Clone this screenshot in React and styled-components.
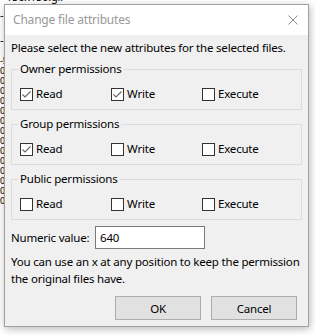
import React from 'react'
import styled, { createGlobalStyle } from 'styled-components'

const GlobalStyle = createGlobalStyle`
  html, body {
    margin: 0;
    padding: 0;
    background: #ffffff;
  }
  body {
    font-family: "Noto Sans", "Open Sans", sans-serif;
    font-size: 11.5px;
    letter-spacing: -0.2px;
    color: #000;
  }
`;

const Screen = styled.div`
  position: relative;
  width: 315px;
  height: 335px;
  overflow: hidden;
  background: #ffffff;
`;

// file list of the main window, mostly hidden behind the dialog
const FileList = styled.div`
  display: flex;
  flex-direction: column;
  margin-top: -11px;
  color: #000;
`;
const FileLine = styled.div`
  white-space: nowrap;
  font-size: ${p => (p.h < 12 ? 9 : 11)}px;
  height: ${p => p.h}px;
  line-height: ${p => p.h}px;
  overflow: hidden;
`;

const Dialog = styled.div`
  position: absolute;
  left: 4px;
  top: 4px;
  width: 305px;
  height: 323px;
  box-sizing: border-box;
  border: 1px solid #a0a0a0;
  background: #f0f0f0;
  box-shadow: 1px 2px 8px rgba(0, 0, 0, 0.28);
  display: flex;
  flex-direction: column;
`;

const TitleBar = styled.div`
  flex-shrink: 0;
  height: 30px;
  background: #ffffff;
  display: flex;
  align-items: center;
  justify-content: space-between;
  padding: 0 10px 0 8px;
`;
const Title = styled.div`
  color: #999999;
  font-size: 12px;
  margin-top: -1px;
`;
const CloseIcon = styled.svg`
  width: 10px;
  height: 10px;
`;

const Body = styled.div`
  flex: 1;
  display: flex;
  flex-direction: column;
  padding: 5px 6px 6px 6px;
  white-space: nowrap;
`;

const Prompt = styled.div`
  line-height: 16px;
  margin-bottom: 6px;
`;

const Group = styled.fieldset`
  margin: 0 0 7px 0;
  padding: 10px 8px 7px 8px;
  border: 1px solid #dcdcdc;
  min-width: 0;
`;
const Legend = styled.legend`
  padding: 0 2px;
  margin-left: -2px;
  line-height: 14px;
`;
const CheckRow = styled.div`
  display: grid;
  grid-template-columns: 91px 91px 1fr;
  height: 16px;
`;
const CheckItem = styled.label`
  display: flex;
  align-items: center;
  gap: 3px;
  line-height: 16px;
`;
const Box = styled.span`
  width: 11px;
  height: 11px;
  border: 1px solid #333333;
  background: #ffffff;
  display: flex;
  align-items: center;
  justify-content: center;
  flex-shrink: 0;
`;

const ValueRow = styled.div`
  display: flex;
  align-items: center;
  margin-top: -1px;
`;
const ValueLabel = styled.div`
  width: 84px;
  flex-shrink: 0;
`;
const ValueInput = styled.div`
  width: 110px;
  height: 23px;
  box-sizing: border-box;
  border: 1px solid #7a7a7a;
  background: #ffffff;
  padding-left: 4px;
  display: flex;
  align-items: center;
`;

const Info = styled.div`
  line-height: 17px;
  margin-top: 4px;
`;

const Buttons = styled.div`
  margin-top: auto;
  display: flex;
  justify-content: flex-end;
  gap: 10px;
  padding-right: 5px;
`;
const Button = styled.div`
  width: 86px;
  height: 24px;
  box-sizing: border-box;
  border: 1px solid #adadad;
  background: #e1e1e1;
  display: flex;
  align-items: center;
  justify-content: center;
`;

const Check = ({ label, checked }) => (
  <CheckItem>
    <Box>
      {checked && (
        <svg width="11" height="11" viewBox="0 0 11 11">
          <path d="M1.5 5.5 L4 8 L9.5 2.5" fill="none" stroke="#666" strokeWidth="1.1" />
        </svg>
      )}
    </Box>
    {label}
  </CheckItem>
);

const groups = [
  { name: 'Owner permissions', values: [true, true, false] },
  { name: 'Group permissions', values: [true, false, false] },
  { name: 'Public permissions', values: [false, false, false] },
];
const perms = ['Read', 'Write', 'Execute'];

const sideLines = [
  { text: '-  150x150.gif', h: 16 },
  { text: '-', h: 19 },
  { text: '-', h: 32 },
  { text: '-!', h: 10 },
  ...Array.from({ length: 14 }, () => ({ text: '0', h: 10 })),
];

const App = () => (
  <Screen>
    <GlobalStyle />
    <FileList>
      {sideLines.map((l, i) => (
        <FileLine key={i} h={l.h}>{l.text}</FileLine>
      ))}
    </FileList>
    <Dialog>
      <TitleBar>
        <Title>Change file attributes</Title>
        <CloseIcon viewBox="0 0 10 10">
          <path d="M0.5 0.5 L9.5 9.5 M9.5 0.5 L0.5 9.5" stroke="#8a8a8a" strokeWidth="1" fill="none" />
        </CloseIcon>
      </TitleBar>
      <Body>
        <Prompt>Please select the new attributes for the selected files.</Prompt>
        {groups.map(g => (
          <Group key={g.name}>
            <Legend>{g.name}</Legend>
            <CheckRow>
              {perms.map((p, i) => (
                <Check key={p} label={p} checked={g.values[i]} />
              ))}
            </CheckRow>
          </Group>
        ))}
        <ValueRow>
          <ValueLabel>Numeric value:</ValueLabel>
          <ValueInput>640</ValueInput>
        </ValueRow>
        <Info>
          You can use an x at any position to keep the permission<br />
          the original files have.
        </Info>
        <Buttons>
          <Button>OK</Button>
          <Button>Cancel</Button>
        </Buttons>
      </Body>
    </Dialog>
  </Screen>
)

export default App
